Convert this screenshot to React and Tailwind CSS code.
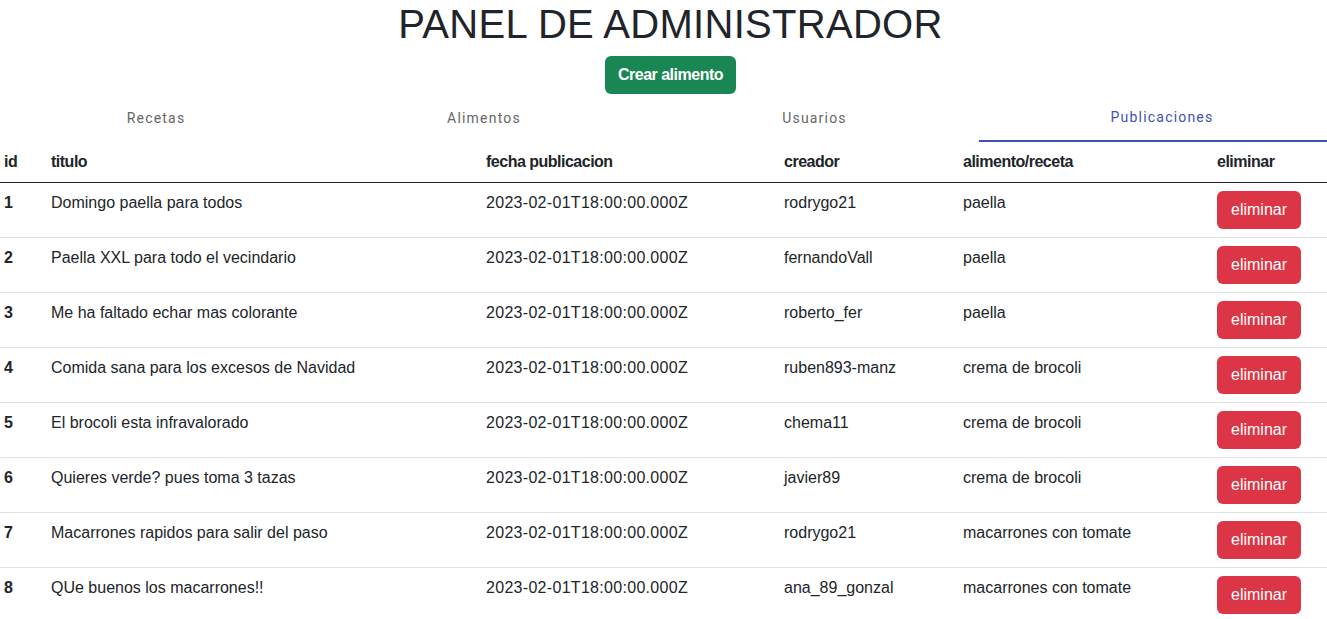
import React from 'react'

const posts = [
  { id: 1, titulo: 'Domingo paella para todos', creador: 'rodrygo21', alimento: 'paella' },
  { id: 2, titulo: 'Paella XXL para todo el vecindario', creador: 'fernandoVall', alimento: 'paella' },
  { id: 3, titulo: 'Me ha faltado echar mas colorante', creador: 'roberto_fer', alimento: 'paella' },
  { id: 4, titulo: 'Comida sana para los excesos de Navidad', creador: 'ruben893-manz', alimento: 'crema de brocoli' },
  { id: 5, titulo: 'El brocoli esta infravalorado', creador: 'chema11', alimento: 'crema de brocoli' },
  { id: 6, titulo: 'Quieres verde? pues toma 3 tazas', creador: 'javier89', alimento: 'crema de brocoli' },
  { id: 7, titulo: 'Macarrones rapidos para salir del paso', creador: 'rodrygo21', alimento: 'macarrones con tomate' },
  { id: 8, titulo: 'QUe buenos los macarrones!!', creador: 'ana_89_gonzal', alimento: 'macarrones con tomate' },
]

const fecha = '2023-02-01T18:00:00.000Z'

const App = () => {
  return (
    <div className="w-[1327px] bg-white text-[#212529] font-['Liberation_Sans',Arial,sans-serif]">
      <h1 className="pl-[14px] text-center text-[40px] leading-[48px] font-normal tracking-[0.3px]">PANEL DE ADMINISTRADOR</h1>

      <div className="flex justify-center mt-2 pl-[14px]">
        <button className="h-[38px] px-[13px] rounded-md bg-[#198754] text-white text-base font-bold tracking-[-0.5px]">
          Crear alimento
        </button>
      </div>

      <nav className="flex h-12 font-['Roboto',sans-serif] text-sm font-normal tracking-[1.2px]">
        <div className="w-[312px] flex items-center justify-center text-[#666]">Recetas</div>
        <div className="w-[344px] flex items-center justify-center text-[#666]">Alimentos</div>
        <div className="w-[323px] flex items-center justify-center text-[#666] pr-[6px]">Usuarios</div>
        <div className="flex-1 flex items-center justify-center text-[#3f51b5] pl-[18px] border-b-2 border-[#3f51b5]">Publicaciones</div>
      </nav>

      <table className="w-full table-fixed border-collapse">
        <colgroup>
          <col className="w-[47px]" />
          <col className="w-[435px]" />
          <col className="w-[298px]" />
          <col className="w-[179px]" />
          <col className="w-[254px]" />
          <col />
        </colgroup>
        <thead>
          <tr className="border-b border-[#212529] text-left">
            <th className="px-1 py-2 leading-6 font-bold tracking-[-0.5px]">id</th>
            <th className="px-1 py-2 leading-6 font-bold tracking-[-0.5px]">titulo</th>
            <th className="px-1 py-2 leading-6 font-bold tracking-[-0.5px]">fecha publicacion</th>
            <th className="px-1 py-2 leading-6 font-bold tracking-[-0.5px]">creador</th>
            <th className="px-1 py-2 leading-6 font-bold tracking-[-0.5px]">alimento/receta</th>
            <th className="px-1 py-2 leading-6 font-bold tracking-[-0.5px]">eliminar</th>
          </tr>
        </thead>
        <tbody>
          {posts.map((p) => (
            <tr key={p.id} className="border-b border-[#dee2e6] align-top">
              <th className="px-1 py-2 leading-6 text-left font-bold">{p.id}</th>
              <td className="px-1 py-2 leading-6">{p.titulo}</td>
              <td className="px-1 py-2 leading-6 tracking-[0.3px]">{fecha}</td>
              <td className="px-1 py-2 leading-6">{p.creador}</td>
              <td className="px-1 py-2 leading-6">{p.alimento}</td>
              <td className="px-1 py-2 leading-6">
                <button className="h-[38px] w-[84px] rounded-md bg-[#dc3545] text-white text-base">eliminar</button>
              </td>
            </tr>
          ))}
        </tbody>
      </table>
    </div>
  )
}

export default App
